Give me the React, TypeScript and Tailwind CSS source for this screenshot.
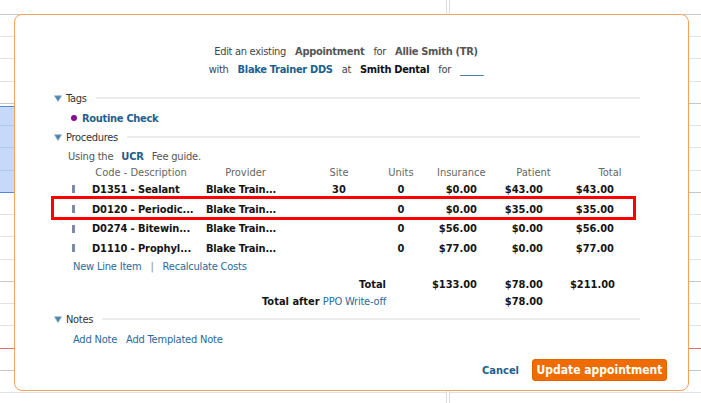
import React from "react";

const rowsIdx = Array.from({ length: 18 }, (_, i) => i);

function CalColumn({ blue }: { blue?: boolean }) {
  return (
    <div className="relative flex flex-col pt-[14px]">
      {rowsIdx.map((i) => (
        <div
          key={i}
          className={
            "h-[22.24px] shrink-0 border-t " +
            (i === 15
              ? "border-[#e27070]"
              : i % 4 === 0
              ? "border-[#c6c6c6]"
              : "border-[#e2e2e2]")
          }
        />
      ))}
      {blue && (
        <div className="absolute left-0 right-0 top-[106px] h-[87px] border-y border-[#4f88e6] bg-[rgba(120,165,240,0.42)]" />
      )}
    </div>
  );
}

function Tri() {
  return (
    <svg width="8" height="7" viewBox="0 0 8 7" className="ml-[2px] shrink-0">
      <polygon points="0.5,0.8 7.5,0.8 4,6.5" fill="#4f80a9" stroke="#8fb0cc" strokeWidth="0.8" />
    </svg>
  );
}

function SectionHeader({ title, h }: { title: string; h: string }) {
  return (
    <div className={"flex items-center " + h}>
      <Tri />
      <span className="ml-[4px] tracking-[-0.3px] text-[#333]">{title}</span>
      <div className="ml-[9px] h-[2px] flex-1 bg-[#ececec]" />
    </div>
  );
}

type RowProps = {
  code: string;
  provider: string;
  site: string;
  units: string;
  ins: string;
  pat: string;
  tot: string;
  h: string;
  highlight?: boolean;
};

function ProcRow({ code, provider, site, units, ins, pat, tot, h, highlight }: RowProps) {
  return (
    <div className={"relative flex items-center font-bold text-[#151515] " + h}>
      <div className="w-[40px] shrink-0">
        <div className="ml-[20px] h-[8px] w-[3px] bg-[#7d8ba4]" />
      </div>
      <div className="w-[98px] shrink-0 whitespace-nowrap tracking-[-0.1px]">{code}</div>
      <div className="ml-[16px] w-[79px] shrink-0 whitespace-nowrap tracking-[-0.2px]">{provider}</div>
      <div className="ml-[34px] w-[40px] shrink-0 text-center">{site}</div>
      <div className="ml-[22px] w-[40px] shrink-0 text-center">{units}</div>
      <div className="w-[56px] shrink-0 text-right">{ins}</div>
      <div className="w-[66px] shrink-0 text-right">{pat}</div>
      <div className="w-[71px] shrink-0 text-right">{tot}</div>
      {highlight && (
        <div className="pointer-events-none absolute -left-[1px] right-[4px] -top-[3px] -bottom-[1px] border-[3px] border-[#ff0000]" />
      )}
    </div>
  );
}

function HeaderRow() {
  return (
    <div className="flex h-[10px] items-center text-[#666]">
      <div className="w-[40px] shrink-0" />
      <div className="w-[98px] shrink-0 whitespace-nowrap text-center">Code - Description</div>
      <div className="ml-[16px] w-[79px] shrink-0 text-center">Provider</div>
      <div className="ml-[34px] w-[40px] shrink-0 text-center">Site</div>
      <div className="ml-[22px] w-[40px] shrink-0 text-center">Units</div>
      <div className="ml-[16px] w-[48px] shrink-0 text-center">Insurance</div>
      <div className="ml-[18px] w-[61px] shrink-0 text-center">Patient</div>
      <div className="ml-[21px] w-[50px] shrink-0 text-center">Total</div>
    </div>
  );
}

export default function App() {
  return (
    <div className="relative h-[403px] w-[701px] overflow-hidden bg-white [font-family:'DejaVu_Sans_Condensed','DejaVu_Sans',sans-serif] text-[11px] leading-none">
      <div className="flex h-full">
        <div className="w-[447px] shrink-0 border-r border-[#dcdcdc]">
          <CalColumn blue />
        </div>
        <div className="w-[2px] shrink-0" />
        <div className="flex-1 border-l border-[#dcdcdc]">
          <CalColumn />
        </div>
      </div>

      <div className="absolute left-[14px] top-[14px] flex h-[377px] w-[675px] flex-col rounded-[8px] border border-[#f5a25d] bg-white pl-[37px] pr-[48px] pt-[27px]">
        <div className="flex h-[18px] items-center justify-center gap-[9px] tracking-[-0.3px] text-[#444]">
          <span>Edit an existing</span>
          <span className="font-bold text-[#555]">Appointment</span>
          <span>for</span>
          <span className="font-bold text-[#555]">Allie Smith (TR)</span>
        </div>
        <div className="flex h-[18px] items-center justify-center gap-[9px] tracking-[-0.3px] text-[#444]">
          <span>with</span>
          <span className="font-bold text-[#1d5f8f]">Blake Trainer DDS</span>
          <span>at</span>
          <span className="font-bold text-[#111]">Smith Dental</span>
          <span>for</span>
          <span className="text-[#1d5f8f]">_____</span>
        </div>

        <div className="mt-[11px]">
          <SectionHeader title="Tags" h="h-[18px]" />
        </div>
        <div className="flex h-[22px] items-center pl-[19px]">
          <span className="h-[6px] w-[6px] rounded-full bg-[#8a0b8f]" />
          <span className="ml-[5px] font-bold tracking-[-0.3px] text-[#1d5f8f]">Routine Check</span>
        </div>
        <SectionHeader title="Procedures" h="h-[16px]" />
        <div className="flex h-[22px] items-center pl-[16px] tracking-[-0.2px] text-[#555]">
          <span>Using the</span>
          <span className="ml-[8px] font-bold text-[#1d5f8f]">UCR</span>
          <span className="ml-[8px]">Fee guide.</span>
        </div>
        <HeaderRow />
        <div className="h-[2px]" />
        <ProcRow code="D1351 - Sealant" provider="Blake Train..." site="30" units="0" ins="$0.00" pat="$43.00" tot="$43.00" h="h-[20px]" />
        <ProcRow code="D0120 - Periodic..." provider="Blake Train..." site="" units="0" ins="$0.00" pat="$35.00" tot="$35.00" h="h-[20px]" highlight />
        <ProcRow code="D0274 - Bitewin..." provider="Blake Train..." site="" units="0" ins="$56.00" pat="$0.00" tot="$56.00" h="h-[19px]" />
        <ProcRow code="D1110 - Prophyl..." provider="Blake Train..." site="" units="0" ins="$77.00" pat="$0.00" tot="$77.00" h="h-[20px]" />

        <div className="flex h-[16px] items-center pl-[21px] tracking-[-0.2px] text-[#2a6a9a]">
          <span>New Line Item</span>
          <span className="mx-[9px] text-[#888]">|</span>
          <span>Recalculate Costs</span>
        </div>

        <div className="flex h-[20px] items-center font-bold text-[#151515]">
          <div className="w-[334px] shrink-0 text-right">Total</div>
          <div className="ml-[35px] w-[56px] shrink-0 text-right">$133.00</div>
          <div className="w-[66px] shrink-0 text-right">$78.00</div>
          <div className="w-[72px] shrink-0 text-right">$211.00</div>
        </div>
        <div className="flex h-[14px] items-center">
          <div className="w-[334px] shrink-0 text-right">
            <span className="font-bold text-[#151515]">Total after</span>{" "}
            <span className="tracking-[-0.2px] text-[#2a6a9a]">PPO Write-off</span>
          </div>
          <div className="ml-[35px] w-[56px] shrink-0" />
          <div className="w-[66px] shrink-0 text-right font-bold text-[#151515]">$78.00</div>
        </div>

        <SectionHeader title="Notes" h="h-[22px]" />
        <div className="flex h-[18px] items-center pl-[21px] tracking-[-0.2px] text-[#2a6a9a]">
          <span>Add Note</span>
          <span className="ml-[9px]">Add Templated Note</span>
        </div>

        <div className="mr-[-27px] mt-[11px] flex items-center justify-end">
          <span className="font-bold text-[#1d5f8f]">Cancel</span>
          <button className="ml-[13px] flex h-[22px] w-[135px] items-center justify-center rounded-[3px] border border-[#e06300] bg-[#ef6c00] text-[12px] font-bold text-white">
            Update appointment
          </button>
        </div>
      </div>
    </div>
  );
}
